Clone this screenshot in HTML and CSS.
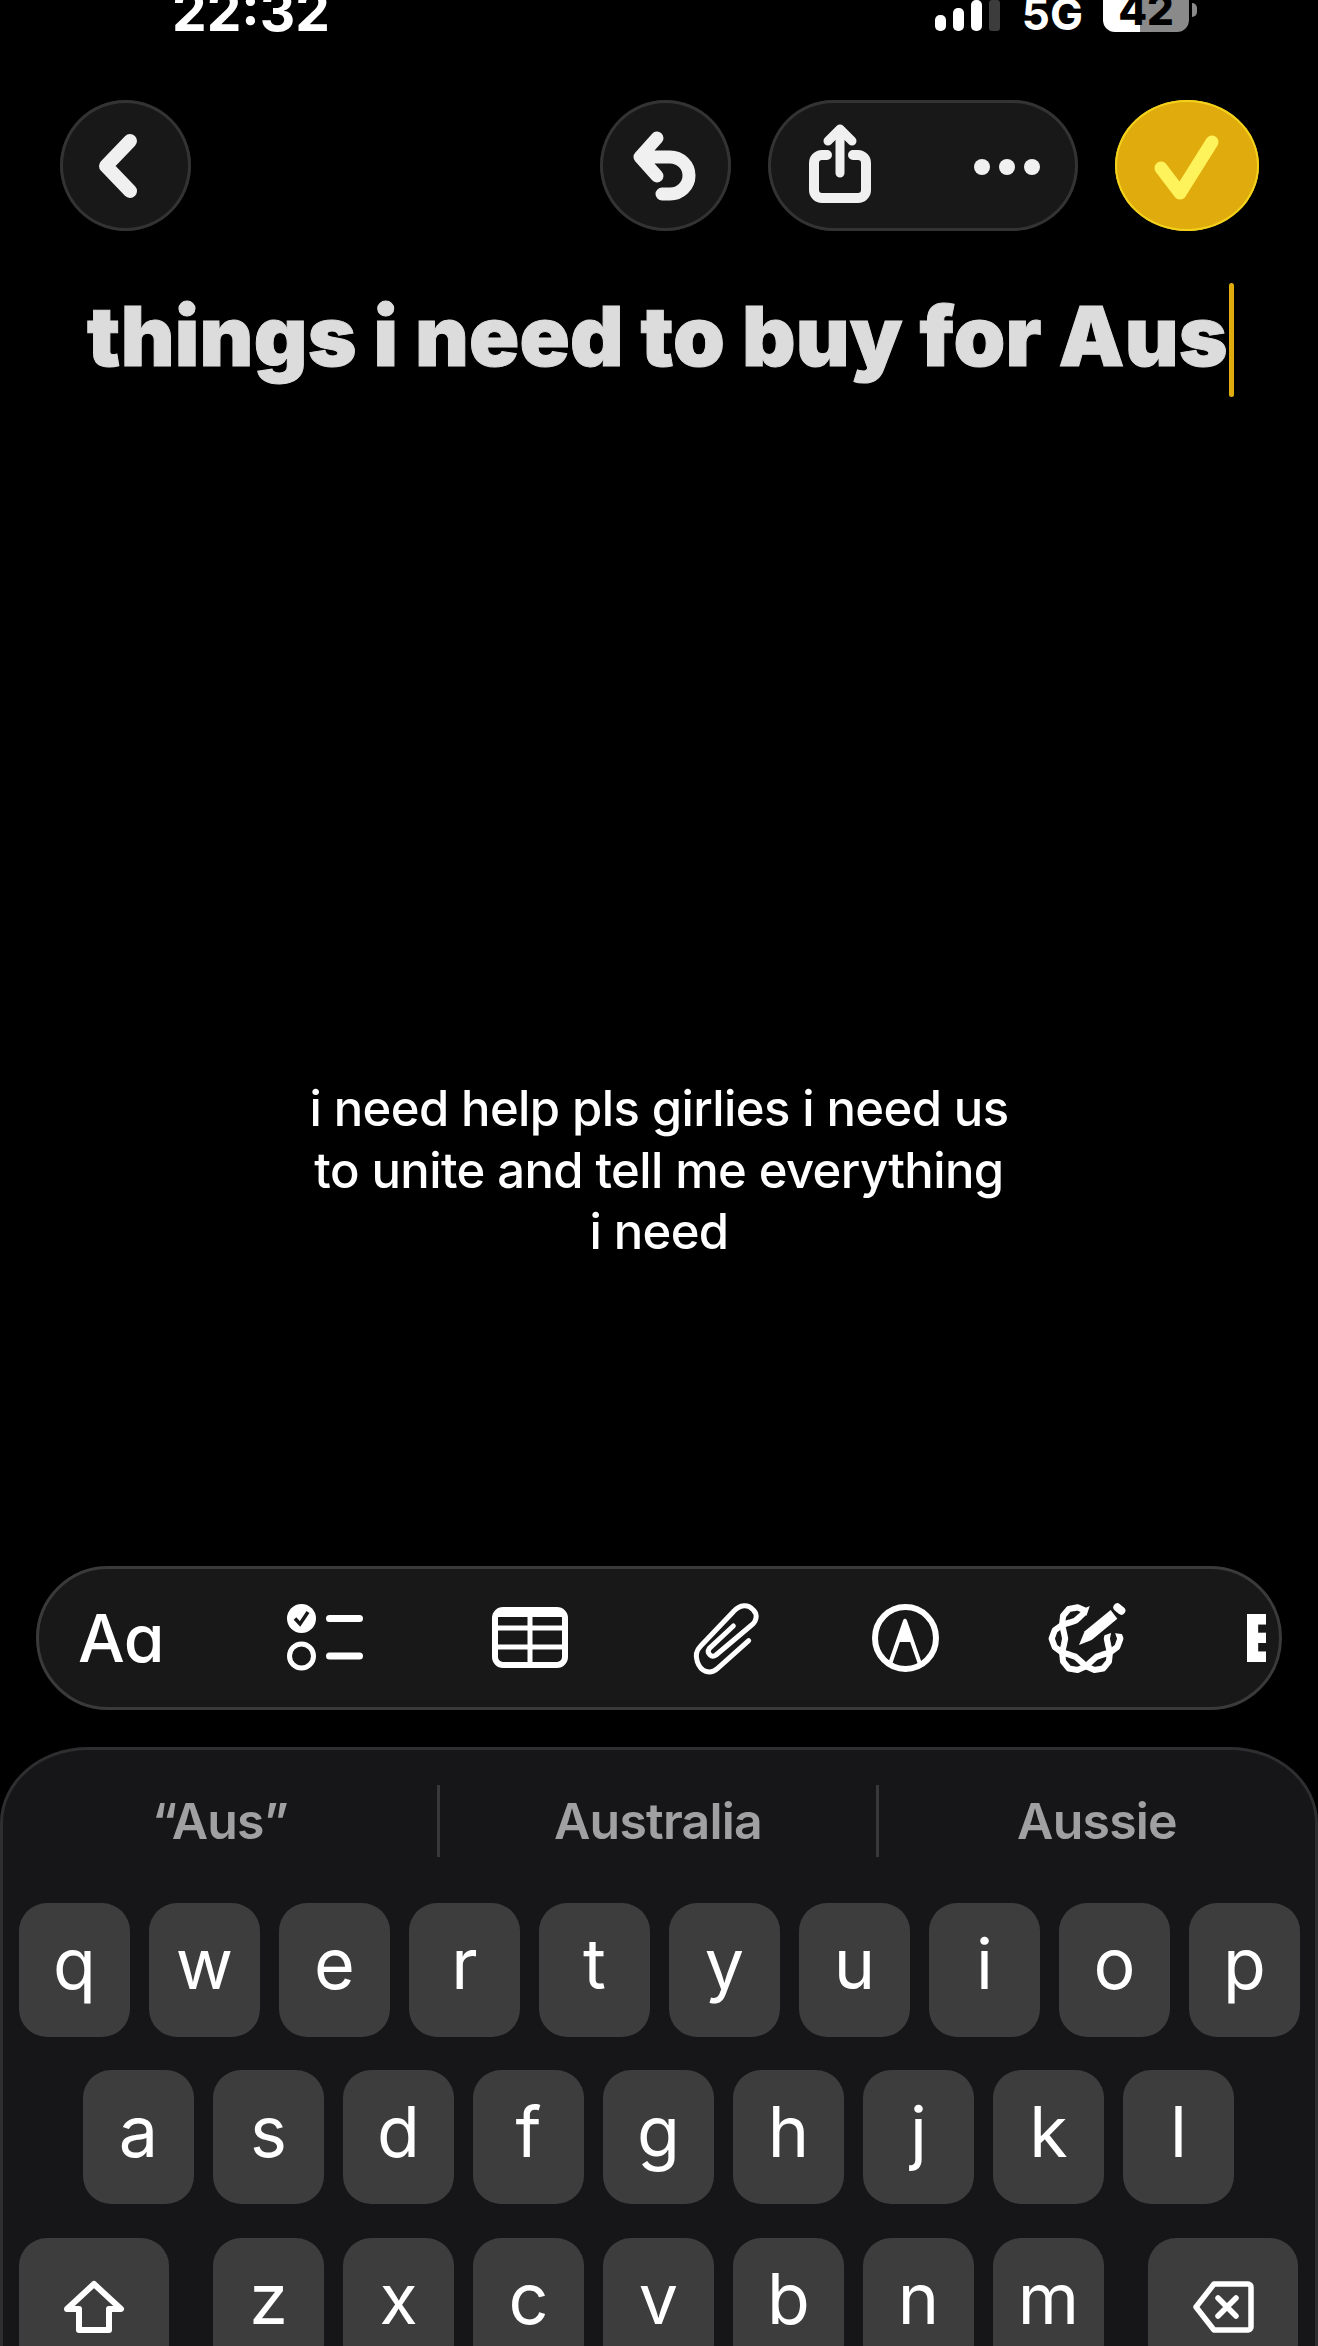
FILE: index.html
```html
<!DOCTYPE html>
<html lang="en">
<head>
  <meta charset="UTF-8" />
  <meta name="viewport" content="width=device-width, initial-scale=1.0">
  <title>things i need to buy for Aus</title>
  <link rel="stylesheet" href="styles.css">
</head>
<body>
  <div class="status-bar">
    <div class="time">22:32</div>
    <div class="signal">
      <span class="bar bar-1"></span>
      <span class="bar bar-2"></span>
      <span class="bar bar-3"></span>
      <span class="bar bar-4"></span>
    </div>
    <div class="network">5G</div>
    <div class="battery">42</div>
    <div class="battery-nub"></div>
  </div>

  <div class="top-bar">
    <button class="round-btn">
      <svg width="131" height="131" viewBox="0 0 131 131"><path d="M70 41 L46 66 L70 91" class="ico" stroke-width="14"/></svg>
    </button>
    <button class="round-btn undo-btn">
      <svg width="131" height="131" viewBox="0 0 131 131"><path d="M57 38 L40 57 L57 76 M40 57 H70 a19 18.5 0 0 1 0 37 H62" class="ico" stroke-width="13"/></svg>
    </button>
    <div class="pill-btn">
      <svg width="310" height="131" viewBox="0 0 310 131">
        <path d="M59 55 H54 a8 8 0 0 0 -8 8 V90 a8 8 0 0 0 8 8 H90 a8 8 0 0 0 8 -8 V63 a8 8 0 0 0 -8 -8 H85" class="ico" stroke-width="10"/>
        <path d="M72 73 V30 M60 41 L72 29 L84 41" class="ico" stroke-width="9"/>
        <circle cx="214" cy="67" r="8" fill="#f0f0f0"/>
        <circle cx="239" cy="67" r="8" fill="#f0f0f0"/>
        <circle cx="264" cy="67" r="8" fill="#f0f0f0"/>
      </svg>
    </div>
    <button class="done-btn">
      <svg width="144" height="131" viewBox="0 0 144 131"><path d="M46 68 L65 93 L97 42" fill="none" stroke="#fff35c" stroke-width="13" stroke-linecap="round" stroke-linejoin="round"/></svg>
    </button>
  </div>

  <div class="title-row">
    <h1 class="title">things i need to buy for Aus</h1>
    <span class="caret"></span>
  </div>

  <p class="note">i need help pls girlies i need us<br>to unite and tell me everything<br>i need</p>

  <div class="format-bar">
    <span class="tool tool-aa">Aɑ</span>
    <svg class="tool tool-list" width="76" height="67" viewBox="0 0 76 67">
      <circle cx="14.5" cy="14.5" r="14.5" fill="#fff"/>
      <path d="M8 14.5 L13 20 L21 8" fill="none" stroke="#181818" stroke-width="3.5"/>
      <path d="M42.5 14.5 H72.5 M42.5 52 H72.5" class="ico-w" stroke-width="7"/>
      <circle cx="14.5" cy="52" r="12" fill="none" stroke="#fff" stroke-width="5"/>
    </svg>
    <svg class="tool tool-table" width="76" height="61" viewBox="0 0 76 61">
      <rect x="3" y="3" width="70" height="55" rx="8" fill="none" stroke="#fff" stroke-width="6"/>
      <path d="M3 7 H73" stroke="#fff" stroke-width="6"/>
      <path d="M38 3 V58 M3 21 H73 M3 40 H73" stroke="#fff" stroke-width="5"/>
    </svg>
    <svg class="tool tool-clip" width="100" height="100" viewBox="0 0 300 300">
      <path d="M206 152 L112 236 C90 255 62 245 52 215 C45 195 50 180 62 168 L160 65 C180 42 205 42 220 60 C235 75 228 95 215 105 L108 195 C95 205 78 190 88 175 L160 108" class="ico-w" stroke-width="15"/>
    </svg>
    <svg class="tool tool-pen" width="67" height="68" viewBox="0 0 67 68">
      <ellipse cx="33.5" cy="34" rx="30.5" ry="31" fill="none" stroke="#fff" stroke-width="6"/>
      <path d="M33 17 L18 60 M33 17 L48 60" class="ico-w" stroke-width="4"/>
      <path d="M33 14 L26 38 H40 Z" fill="#fff"/>
    </svg>
    <svg class="tool tool-writing" width="100" height="100" viewBox="0 0 300 300">
      <defs>
        <mask id="wreathGap">
          <rect width="300" height="300" fill="#fff"/>
          <path d="M110 165 L162 10 H300 V140 L215 128 Z" fill="#000"/>
        </mask>
      </defs>
      <g mask="url(#wreathGap)">
        <g transform="translate(138 146) scale(.92) translate(-135 -148)" fill="none" stroke="#fff" stroke-width="20" stroke-linejoin="round">
          <polygon points="247,148 237,120.7 212.9,103 187.6,95.4 169,89.1 154.3,76.1 135,58 107.7,46 79,51 60.3,73.3 57.1,103 63.1,128.7 67,148 63.1,167.3 57.1,193 60.3,222.7 79,245 107.7,250 135,238 154.3,219.9 169,206.9 187.6,200.6 212.9,193 237,175.3"/>
          <polygon points="203,148 206.9,128.7 212.9,103 209.7,73.3 191,51 162.3,46 135,58 115.7,76.1 101,89.1 82.4,95.4 57.1,103 33,120.7 23,148 33,175.3 57.1,193 82.4,200.6 101,206.9 115.7,219.9 135,238 162.3,250 191,245 209.7,222.7 212.9,193 206.9,167.3"/>
        </g>
      </g>
      <path d="M117 165 L134 124 L212 60 L232 86 L155 150 Z" fill="#fff"/>
      <path d="M232 52 L244 62" stroke="#fff" stroke-width="24" stroke-linecap="round"/>
    </svg>
    <span class="tool tool-next">E</span>
  </div>

  <div class="keyboard">
    <div class="suggestions">
      <div class="suggestion">“Aus”</div>
      <div class="suggestion divided">Australia</div>
      <div class="suggestion divided">Aussie</div>
    </div>
    <div class="keys">
      <div class="key-row row-top">
        <div class="key">q</div><div class="key">w</div><div class="key">e</div><div class="key">r</div><div class="key">t</div><div class="key">y</div><div class="key">u</div><div class="key">i</div><div class="key">o</div><div class="key">p</div>
      </div>
      <div class="key-row row-mid">
        <div class="key">a</div><div class="key">s</div><div class="key">d</div><div class="key">f</div><div class="key">g</div><div class="key">h</div><div class="key">j</div><div class="key">k</div><div class="key">l</div>
      </div>
      <div class="key-row row-top">
        <div class="key key-wide shift-key">
          <svg width="62" height="54" viewBox="0 0 62 54"><path d="M31 4 L58 29 H46 V50 H16 V29 H4 Z" fill="none" stroke="#fff" stroke-width="6" stroke-linejoin="round"/></svg>
        </div>
        <div class="key">z</div><div class="key">x</div><div class="key">c</div><div class="key">v</div><div class="key">b</div><div class="key">n</div><div class="key">m</div>
        <div class="key key-wide delete-key">
          <svg width="62" height="52" viewBox="0 0 62 52">
            <path d="M22 3 H56 a3 3 0 0 1 3 3 V46 a3 3 0 0 1 -3 3 H22 L4 26 Z" fill="none" stroke="#fff" stroke-width="5.5" stroke-linejoin="round"/>
            <path d="M26 17 L44 35 M44 17 L26 35" class="ico-w" stroke-width="5.5"/>
          </svg>
        </div>
      </div>
    </div>
  </div>
</body>
</html>
```

FILE: styles.css
```css
* { box-sizing: border-box; }
html, body { margin: 0; padding: 0; }
body {
  width: 1318px;
  height: 2346px;
  overflow: hidden;
  background: #000;
  color: #fff;
  font-family: Inter, "Noto Sans", sans-serif;
}
svg { display: block; flex-shrink: 0; }
.ico { fill: none; stroke: #f0f0f0; stroke-linecap: round; stroke-linejoin: round; }
.ico-w { fill: none; stroke: #fff; stroke-linecap: round; stroke-linejoin: round; }

/* status bar, cut off by the top of the picture */
.status-bar {
  display: flex;
  align-items: flex-end;
  height: 32px;
  overflow: hidden;
}
.time {
  margin-left: 172px;
  margin-bottom: 1px;
  font-size: 55px;
  font-weight: 700;
  line-height: 0.73;
}
.signal {
  display: flex;
  align-items: flex-end;
  gap: 7px;
  height: 31px;
  margin-left: auto;
  margin-bottom: 1px;
}
.bar { width: 11px; background: #fff; border-radius: 5px; }
.bar-1 { height: 16px; }
.bar-2 { height: 23px; }
.bar-3 { height: 31px; }
.bar-4 { height: 31px; background: #3c3c3c; border-radius: 3px; }
.network {
  margin-left: 22px;
  margin-bottom: 2px;
  font-size: 44px;
  font-weight: 700;
  line-height: 0.73;
}
.battery {
  width: 86px;
  height: 44px;
  margin-left: 20px;
  padding-bottom: 6px;
  border-radius: 12px;
  background: linear-gradient(90deg, #fff 37px, #8a8a8a 37px);
  color: #000;
  font-size: 42px;
  font-weight: 800;
  line-height: 0.73;
  display: flex;
  align-items: flex-end;
  justify-content: center;
}
.battery-nub {
  width: 5px;
  height: 14px;
  margin: 0 121px 15px 3px;
  border-radius: 0 5px 5px 0;
  background: #8a8a8a;
}

/* top buttons */
.top-bar {
  display: flex;
  margin-top: 68px;
  padding: 0 59px 0 60px;
}
.round-btn, .pill-btn, .done-btn {
  height: 131px;
  padding: 0;
  border: none;
  background: #181818;
  box-shadow: inset 0 0 0 3px #333;
}
.round-btn { width: 131px; border-radius: 50%; }
.undo-btn { margin-left: auto; }
.pill-btn { width: 310px; margin-left: 37px; border-radius: 66px; }
.done-btn {
  width: 144px;
  margin-left: 37px;
  border-radius: 50%;
  background: #e0ab0c;
  box-shadow: inset 0 0 0 2px #f3d21c;
}

/* note text */
.title-row {
  display: flex;
  align-items: center;
  height: 114px;
  margin-top: 52px;
  padding-left: 87px;
}
.title {
  margin: 0;
  padding-bottom: 8px;
  color: #dcdcdc;
  font-size: 83px;
  font-weight: 900;
  line-height: 114px;
  letter-spacing: 0.2px;
  white-space: nowrap;
  -webkit-text-stroke: 1px #dcdcdc;
}
.caret {
  width: 5px;
  height: 114px;
  margin-left: 1px;
  border-radius: 3px;
  background: #e0ab0c;
}
.note {
  margin: 681px 0 0;
  text-align: center;
  font-size: 49px;
  font-weight: 500;
  line-height: 61.5px;
  letter-spacing: -0.6px;
}

/* formatting bar */
.format-bar {
  display: flex;
  align-items: center;
  width: 1246px;
  height: 144px;
  margin: 303px 0 0 36px;
  overflow: hidden;
  border: 3px solid #3a3a3a;
  border-radius: 72px;
  background: #181818;
}
.tool { flex-shrink: 0; }
.tool-aa {
  width: 83px;
  margin-left: 39px;
  font-size: 66px;
  font-weight: 500;
  line-height: 80px;
  white-space: nowrap;
  letter-spacing: -1px;
}
.tool-list { margin-left: 126px; }
.tool-table { margin-left: 129px; }
.tool-clip { margin-left: 112px; margin-top: 4px; }
.tool-pen { margin-left: 92px; }
.tool-writing { margin-left: 101px; margin-top: 4px; }
.tool-next {
  width: 19px;
  margin-left: 107px;
  overflow: hidden;
  font-size: 66px;
  font-weight: 900;
  line-height: 80px;
  text-indent: -5px;
}

/* keyboard */
.keyboard {
  height: 620px;
  margin-top: 37px;
  border: 3px solid #2e2e30;
  border-bottom: none;
  border-radius: 88px 88px 0 0 / 76px 76px 0 0;
  background: #161618;
}
.suggestions {
  display: grid;
  grid-template-columns: 434px 439px 439px;
  margin-top: 35px;
}
.suggestion {
  height: 72px;
  text-align: center;
  color: #a0a0a2;
  font-size: 50px;
  font-weight: 600;
  line-height: 72px;
  letter-spacing: -0.8px;
}
.divided { border-left: 3px solid #38383a; }
.keys {
  display: flex;
  flex-direction: column;
  gap: 33.5px;
  margin-top: 46px;
}
.key-row { display: flex; gap: 19px; }
.row-top { padding-left: 16px; }
.row-mid { padding-left: 80px; }
.key {
  display: flex;
  align-items: center;
  justify-content: center;
  flex-shrink: 0;
  width: 111px;
  height: 134px;
  padding-bottom: 12px;
  border-radius: 28px;
  background: #3d3d3e;
  font-size: 70px;
  font-weight: 400;
}
.key-wide { width: 150px; padding: 5px 0 0; }
.shift-key { margin-right: 25px; }
.delete-key { margin-left: 25px; }
```
